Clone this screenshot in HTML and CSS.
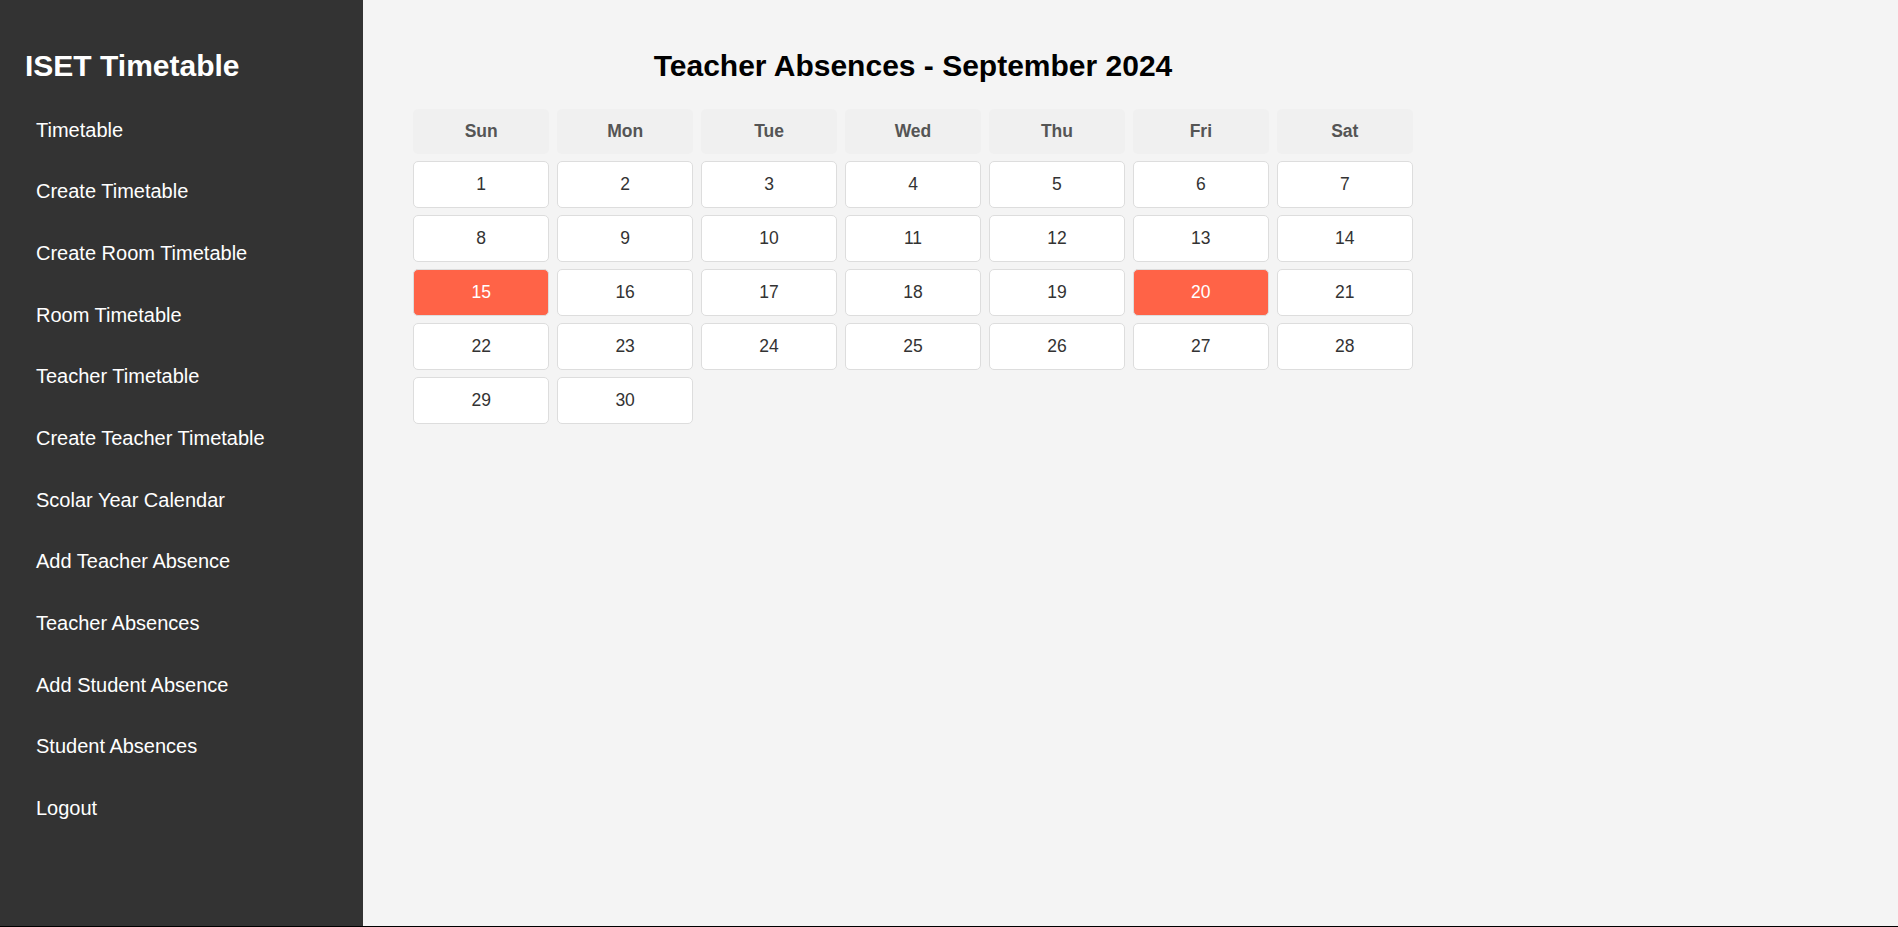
FILE: index.html
```html
<!DOCTYPE html>
<html lang="en">
<head>
<meta charset="utf-8">
<title>Teacher Absences</title>
<link rel="stylesheet" href="styles.css">
</head>
<body>
<aside class="sidebar">
  <h2 class="brand">ISET Timetable</h2>
  <ul class="nav">
    <li><a href="#">Timetable</a></li>
    <li><a href="#">Create Timetable</a></li>
    <li><a href="#">Create Room Timetable</a></li>
    <li><a href="#">Room Timetable</a></li>
    <li><a href="#">Teacher Timetable</a></li>
    <li><a href="#">Create Teacher Timetable</a></li>
    <li><a href="#">Scolar Year Calendar</a></li>
    <li><a href="#">Add Teacher Absence</a></li>
    <li><a href="#">Teacher Absences</a></li>
    <li><a href="#">Add Student Absence</a></li>
    <li><a href="#">Student Absences</a></li>
    <li><a href="#">Logout</a></li>
  </ul>
</aside>
<main class="main">
  <div class="container">
    <h2 class="title">Teacher Absences - September 2024</h2>
    <div class="calendar">
      <div class="head">Sun</div>
      <div class="head">Mon</div>
      <div class="head">Tue</div>
      <div class="head">Wed</div>
      <div class="head">Thu</div>
      <div class="head">Fri</div>
      <div class="head">Sat</div>
      <div class="day">1</div>
      <div class="day">2</div>
      <div class="day">3</div>
      <div class="day">4</div>
      <div class="day">5</div>
      <div class="day">6</div>
      <div class="day">7</div>
      <div class="day">8</div>
      <div class="day">9</div>
      <div class="day">10</div>
      <div class="day">11</div>
      <div class="day">12</div>
      <div class="day">13</div>
      <div class="day">14</div>
      <div class="day absent">15</div>
      <div class="day">16</div>
      <div class="day">17</div>
      <div class="day">18</div>
      <div class="day">19</div>
      <div class="day absent">20</div>
      <div class="day">21</div>
      <div class="day">22</div>
      <div class="day">23</div>
      <div class="day">24</div>
      <div class="day">25</div>
      <div class="day">26</div>
      <div class="day">27</div>
      <div class="day">28</div>
      <div class="day">29</div>
      <div class="day">30</div>
    </div>
  </div>
</main>
</body>
</html>
```
FILE: styles.css
```css
html {
  background: #000;
}
body {
  margin: 0;
  height: 926px;
  display: flex;
  font-family: "Liberation Sans", Arial, sans-serif;
}
.sidebar {
  width: 363px;
  flex: none;
  background: #333333;
  color: #fff;
  box-sizing: border-box;
  padding: 49px 25px 0 25px;
}
.brand {
  margin: 0;
  font-size: 30px;
  font-weight: bold;
  line-height: 34.5px;
  color: #fff;
}
.nav {
  list-style: none;
  margin: 16px 0 0 0;
  padding: 0 0 0 11px;
}
.nav li {
  padding: 19.33px 0;
  font-size: 20px;
  line-height: 23px;
}
.nav a {
  color: #fff;
  text-decoration: none;
}
.main {
  flex: 1;
  background: #f4f4f4;
  padding: 49px 50px 0 50px;
}
.container {
  width: 1000px;
}
.title {
  margin: 0 0 25px 0;
  text-align: center;
  font-size: 30px;
  line-height: 34.5px;
  font-weight: bold;
  color: #000;
}
.calendar {
  display: grid;
  grid-template-columns: repeat(7, 1fr);
  grid-auto-rows: 46.5px;
  grid-template-rows: 45px;
  gap: 7.5px;
}
.head {
  background: #f0f0f0;
  border-radius: 5px;
  display: flex;
  align-items: center;
  justify-content: center;
  font-weight: bold;
  font-size: 17.5px;
  color: #555;
}
.day {
  background: #fff;
  border: 1.25px solid #ddd;
  border-radius: 5px;
  display: flex;
  align-items: center;
  justify-content: center;
  font-size: 17.5px;
  color: #333;
}
.day.absent {
  background: #ff6347;
  color: #fff;
}
```
